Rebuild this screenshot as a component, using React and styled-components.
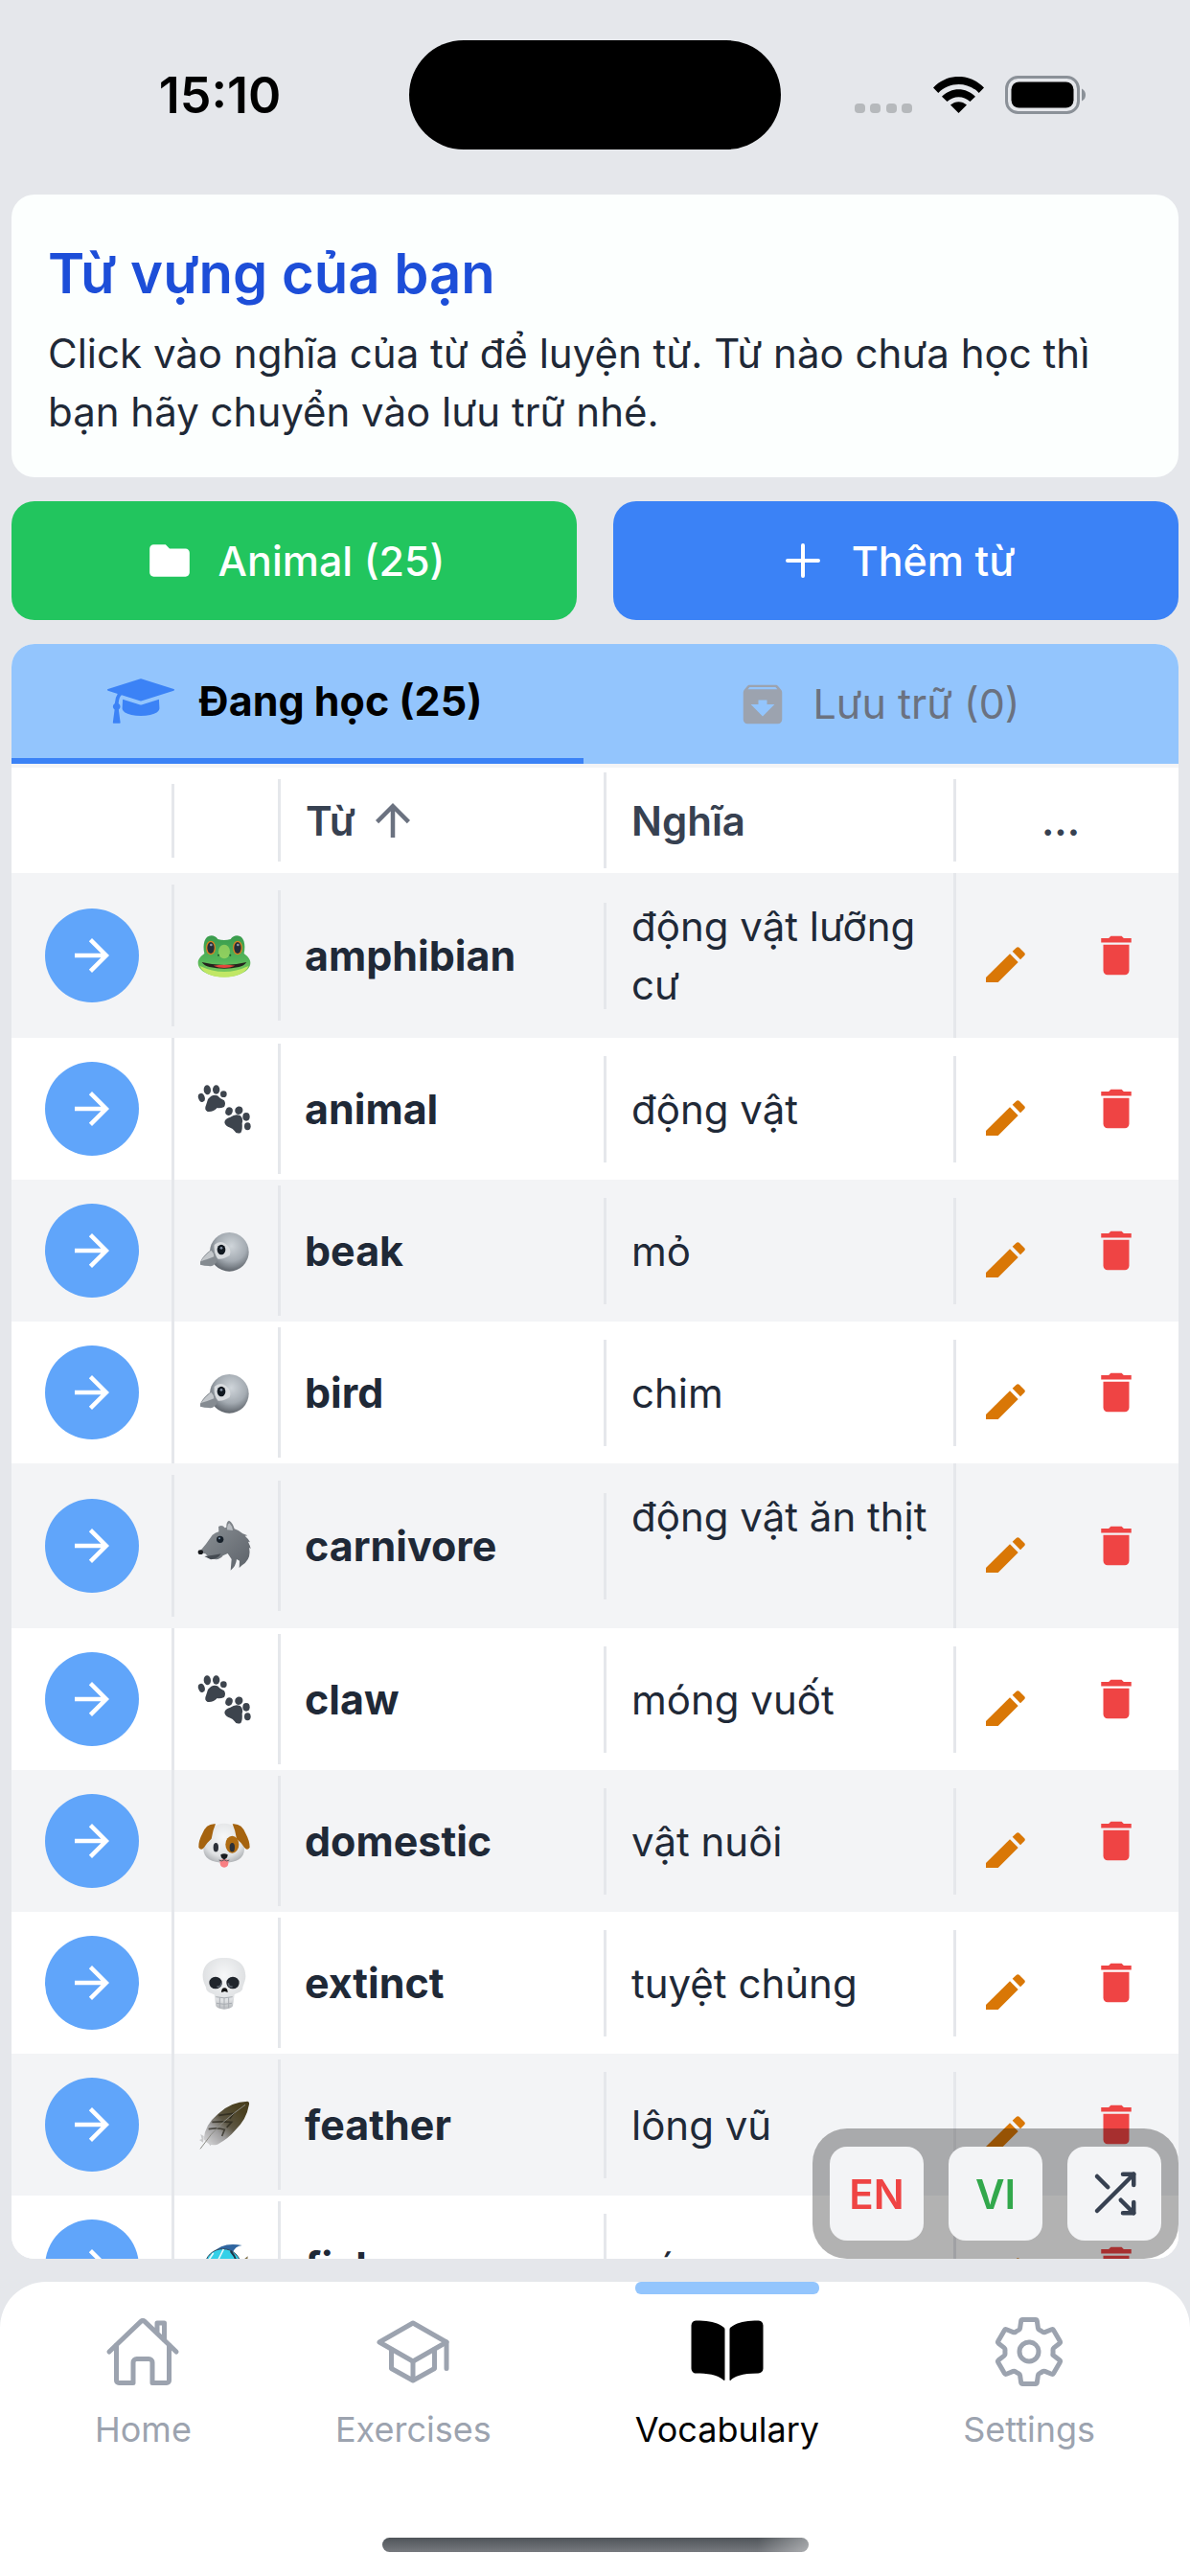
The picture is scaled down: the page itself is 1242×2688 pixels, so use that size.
import React from 'react';
import styled, { createGlobalStyle, css } from 'styled-components';
import { IoHomeOutline, IoSchoolOutline, IoBook, IoSettingsOutline } from 'react-icons/io5';
import { FiShuffle } from 'react-icons/fi';
import { MdArchive, MdFolder, MdDelete, MdArrowForward, MdArrowUpward } from 'react-icons/md';

const GlobalStyle = createGlobalStyle`
  *, *::before, *::after { box-sizing: border-box; }
  body { margin: 0; background: #e5e7eb; }
  body, button {
    font-family: Inter, Roboto, "Noto Sans", sans-serif;
    font-size: 42px;
    line-height: 61px;
    color: #1f2937;
  }
  button { margin: 0; padding: 0; border: 0; background: none; cursor: pointer; }
  svg { display: block; flex: none; }
`;

const Screen = styled.div`
  display: flex;
  flex-direction: column;
  height: 100vh;
`;

/* ---------- status bar ---------- */

const StatusBar = styled.header`
  display: grid;
  grid-template-columns: 1fr 388px 1fr;
  align-items: center;
  flex: none;
  padding: 42px 0 47px;
`;

const Clock = styled.time`
  padding-left: 32px;
  text-align: center;
  font-size: 52px;
  font-weight: 600;
  color: #000;
`;

const Island = styled.div`
  height: 114px;
  border-radius: 57px;
  background: #000;
`;

const StatusIcons = styled.div`
  display: flex;
  align-items: center;
  justify-content: center;
  gap: 22px;
  padding-right: 33px;
`;

/* ---------- page content ---------- */

const Main = styled.main`
  display: flex;
  flex-direction: column;
  flex: 1;
  gap: 25px;
  min-height: 0;
  padding: 0 12px 24px;
`;

const IntroCard = styled.section`
  flex: none;
  padding: 36px 38px 38px;
  border-radius: 24px;
  background: #fcfffe;
`;

const Title = styled.h1`
  margin: 0 0 7px;
  font-size: 58px;
  line-height: 92px;
  font-weight: 600;
  color: #1d4ed8;
`;

const Intro = styled.p`
  margin: 0;
`;

const Actions = styled.div`
  display: grid;
  grid-template-columns: 1fr 1fr;
  flex: none;
  gap: 38px;
`;

const ActionButton = styled.button`
  display: flex;
  align-items: center;
  justify-content: center;
  gap: 24px;
  height: 124px;
  border-radius: 24px;
  background: ${(p) => p.$color};
  font-size: 43px;
  font-weight: 500;
  color: #fff;
`;

const IconBox = styled.span`
  display: grid;
  place-items: center;
  width: 54px;
  height: 54px;
`;

const ListPanel = styled.section`
  position: relative;
  display: flex;
  flex-direction: column;
  flex: 1;
  min-height: 0;
  border-radius: 24px;
  overflow: hidden;
  background: #fff;
`;

const Tabs = styled.div`
  display: grid;
  grid-template-columns: 1fr 1fr;
  position: relative;
  flex: none;
  height: 129px;
  border-bottom: 4px solid #f3f4f6;
  background: #93c5fd;
`;

const Tab = styled.button`
  display: flex;
  align-items: center;
  justify-content: center;
  gap: 26px;
  padding-right: 18px;
  font-size: 43px;
  color: #6b7280;

  svg { color: #9ca3af; }

  ${(p) => p.$active && css`
    padding-bottom: 6px;
    font-weight: 700;
    color: #000;

    svg { color: #3b82f6; }
  `}
`;

const TabIndicator = styled.span`
  position: absolute;
  left: 0;
  bottom: 0;
  width: 49%;
  height: 6px;
  background: #3b82f6;
`;

/* ---------- word table ---------- */

const TableScroll = styled.div`
  flex: 1;
  min-height: 0;
  overflow-y: auto;
  scrollbar-width: none;
`;

const Table = styled.table`
  display: block;
`;

const TableHead = styled.thead`
  display: block;
`;

const TableBody = styled.tbody`
  display: block;
`;

const Row = styled.tr`
  display: grid;
  grid-template-columns: 170px 111px 340fr 365fr 232px;
  align-items: center;
  background: ${(p) => (p.$shaded ? '#f3f4f6' : '#fff')};
`;

const HeadRow = styled(Row)`
  min-height: 110px;
`;

const cell = css`
  display: flex;
  align-items: center;
  padding: 0;
  border-right: 3px solid #e5e7eb;
  text-align: left;
`;

const HeadCell = styled.th`
  ${cell}
  gap: 12px;
  height: ${(p) => p.$height}px;
  padding-left: ${(p) => (p.$text ? 26 : 0)}px;
  font-weight: 600;
  color: #374151;
`;

const HeadMenuCell = styled(HeadCell)`
  justify-content: center;
  padding-right: 14px;
  border-right: 0;
`;

const PlayCell = styled.td`
  ${cell}
  justify-content: center;
  height: 148px;
`;

const EmojiCell = styled.td`
  ${cell}
  justify-content: center;
  height: 136px;
  padding-right: 4px;
`;

const WordCell = styled.th`
  ${cell}
  height: 111px;
  padding-left: 25px;
  font-size: 43px;
  font-weight: 700;
`;

const MeaningCell = styled.td`
  ${cell}
  padding: 25px 24px 25px 26px;
  font-weight: 400;
  white-space: pre-wrap;
`;

const ToolsCell = styled.td`
  ${cell}
  gap: 14px;
  border-right: 0;
`;

const PlayButton = styled.button`
  display: grid;
  place-items: center;
  width: 98px;
  height: 98px;
  border-radius: 50%;
  background: #60a5fa;
  color: #fff;
`;

const ToolButton = styled.button`
  display: grid;
  place-items: center;
  width: 102px;
  height: 98px;
  color: #ef4444;
`;

const EditButton = styled(ToolButton)`
  padding-top: 18px;
  color: #d97706;
`;

/* ---------- floating language switch ---------- */

const FloatingBar = styled.div`
  position: absolute;
  right: 0;
  bottom: 0;
  display: flex;
  gap: 26px;
  padding: 19px 18px;
  border-radius: 36px;
  background: rgba(0, 0, 0, 0.3);
`;

const FloatingButton = styled.button`
  display: grid;
  place-items: center;
  width: 98px;
  height: 98px;
  border-radius: 18px;
  background: #f3f4f6;
  font-weight: 600;
  color: ${(p) => p.$color};
`;

/* ---------- bottom navigation ---------- */

const BottomNav = styled.nav`
  flex: none;
  border-radius: 48px 48px 0 0;
  background: #fff;
`;

const NavList = styled.ul`
  display: flex;
  justify-content: space-between;
  margin: 0;
  padding: 0 99px;
  list-style: none;
`;

const NavLink = styled.a`
  display: flex;
  flex-direction: column;
  align-items: center;
  font-size: 36px;
  line-height: 48px;
  text-decoration: none;
  color: ${(p) => (p.$active ? '#000' : '#9ca3af')};

  &::before {
    content: '';
    align-self: stretch;
    height: 13px;
    margin-bottom: 20px;
    border-radius: 6px;
    background: ${(p) => (p.$active ? '#93c5fd' : 'transparent')};
  }

  svg { margin-bottom: 17px; }
`;

const HomeBar = styled.div`
  width: 445px;
  height: 15px;
  margin: 89px auto 25px;
  border-radius: 8px;
  background: linear-gradient(90deg, transparent 88%, rgba(255, 255, 255, 0.4)),
    linear-gradient(#4f5459, #777a7f);
`;

/* ---------- drawings ---------- */

const SignalDots = () => (
  <svg width="60" height="38" viewBox="0 0 60 38" fill="#b6b9bc" aria-hidden="true">
    {[0, 16, 33, 49].map((x) => <rect key={x} x={x} y="28" width="11" height="10" rx="4" />)}
  </svg>
);

const Wifi = () => (
  <svg width="53" height="38" viewBox="0 0 53 38" aria-hidden="true">
    <path d="M0 11.5C15-4 38-4 53 11.5l-5.3 5.4C36 5 17 5 5.300 16.900z" />
    <path d="M9 20.700c10-10 25-10 35 0l-5.500 5.400c-7-6.500-17-6.500-24 0z" />
    <path d="M18 29.600c5-4.600 12-4.600 17 0L26.500 38z" />
  </svg>
);

const Battery = () => (
  <svg width="84" height="40" viewBox="0 0 84 40" aria-hidden="true">
    <rect x="1.500" y="1.500" width="75" height="37" rx="12" fill="none" stroke="#8b9198" strokeWidth="3" />
    <rect x="6.500" y="6.500" width="65" height="27" rx="8" />
    <path d="M80 13.500q4 2 4 6.500t-4 6.500z" fill="#8b9198" />
  </svg>
);

const Plus = () => (
  <svg width="36" height="36" viewBox="0 0 36 36" fill="none" stroke="currentColor" strokeWidth="4" strokeLinecap="round" aria-hidden="true">
    <path d="M18 2v32M2 18h32" />
  </svg>
);

const GraduationCap = () => (
  <svg width="70" height="47" viewBox="0 128 2304 1536" fill="currentColor" aria-hidden="true">
    <path d="M1774 836l18 316q4 69-82 128t-235 93.500-323 34.500-323-34.500-235-93.500-82-128l18-316 574 181q22 7 48 7t48-7zM2304 512q0 23-22 31l-1120 352q-4 1-10 1t-10-1l-652-206q-43 34-71 111.500t-34 178.500q63 36 63 109 0 69-58 107l58 433q2 14-8 25-9 11-24 11H224q-15 0-24-11-10-11-8-25l58-433q-58-38-58-107 0-73 65-111 11-207 98-330L22 543q-22-8-22-31t22-31l1120-352q4-1 10-1t10 1l1120 352q22 8 22 31z" />
  </svg>
);

const Pencil = () => (
  <svg width="41" height="37" viewBox="0 0 123 111" fill="currentColor" aria-hidden="true">
    <path d="M0 111V96L75 22l26 26-63 63z" />
    <path d="M83 14L95 3q5-5 10 0l15 15q5 5 0 10l-12 12z" />
  </svg>
);

const emojiArt = {
  frog: (
    <>
      <path d="M22 78C16 50 22 22 44 22q12 0 20 11 20 6 40 0 8-11 20-11c22 0 28 28 22 56 10 8 20 16 20 29 0 28-42 44-82 44S2 135 2 107c0-13 10-21 20-29z" fill="url(#frogSkin)" />
      <path d="M8 117q76 36 152 0c-8 23-42 35-76 35s-68-12-76-35z" fill="#c1e765" />
      <ellipse cx="42" cy="60" rx="15" ry="22" fill="#d98221" />
      <ellipse cx="126" cy="60" rx="15" ry="22" fill="#d98221" />
      <ellipse cx="42" cy="60" rx="11" ry="18" fill="#252d38" />
      <ellipse cx="126" cy="60" rx="11" ry="18" fill="#252d38" />
      <circle cx="43" cy="51" r="4" fill="#8d99a5" />
      <circle cx="127" cy="51" r="4" fill="#8d99a5" />
      <ellipse cx="84" cy="72" rx="18" ry="22" fill="#a8dc62" opacity=".7" />
      <circle cx="66" cy="83" r="3" fill="#1d5a2b" />
      <circle cx="103" cy="83" r="3" fill="#1d5a2b" />
      <path d="M14 105q70 18 140 0-8 12-24 15-46 10-92 0-16-3-24-15z" fill="#24221d" />
      <path d="M50 116q34-6 68 0-34 14-68 0z" fill="#e5463c" />
    </>
  ),
  paws: (
    <g fill="#3d444d">
      <ellipse cx="13" cy="49" rx="10" ry="14" transform="rotate(-18 13 49)" />
      <ellipse cx="31" cy="25" rx="11" ry="15" transform="rotate(-6 31 25)" />
      <ellipse cx="59" cy="24" rx="11" ry="14" />
      <ellipse cx="82" cy="38" rx="10" ry="10" />
      <path d="M33 54q14-18 30-11 8 10 21 15 6 10 0 20-12 5-22 3-12 14-30 12-12-6-5-20z" />
      <ellipse cx="99" cy="92" rx="11" ry="13" transform="rotate(20 99 92)" />
      <ellipse cx="130" cy="89" rx="12" ry="13" transform="rotate(35 130 89)" />
      <ellipse cx="153" cy="109" rx="11" ry="13" />
      <ellipse cx="157" cy="139" rx="10" ry="12" />
      <path d="M85 127q0-12 18-17 16-12 31-5 11 10 6 25 2 20-4 29-14 5-20-6-5-8-13-10-16-4-18-16z" />
    </g>
  ),
  bird: (
    <>
      <circle cx="100" cy="88" r="61" fill="url(#birdHead)" />
      <path d="M9 119q9-20 34-38 18 12 17 39-12 16-24 12-14 0-27-4z" fill="#858b91" />
      <path d="M11 117q11-17 32-34 9 8 9 20-18 8-41 14z" fill="#c3c7cb" />
      <path d="M53 66q18-16 36-3 20 16 12 36-17 12-36 11-14-14-12-44z" fill="#d9dcdf" />
      <ellipse cx="75" cy="81" rx="13" ry="16" fill="#111820" />
      <circle cx="75" cy="76" r="4" fill="#8592a3" />
    </>
  ),
  wolf: (
    <>
      <path d="M5 105q24-28 42-55 10-8 20-10l-1-16q12-8 20 4l5-2q-1-18 8-21 12 6 17 26 16 5 26 15l15 6-8 1q10 8 16 20l-6-2q6 12 8 22l-5-3q8 36-22 55l-9 8 1-22-9-5q-2 22-19 35l3-35-12-18-15 7q-8 11-22 12l-20-5-13-13z" fill="url(#wolfFur)" />
      <path d="M93 34q0-16 7-21 9 8 11 23z" fill="#b9bdc2" />
      <path d="M22 117q20-2 52-8-10 17-32 18z" fill="#454b52" />
      <ellipse cx="10" cy="104" rx="8" ry="7" fill="#17191c" />
      <circle cx="71" cy="64" r="11" fill="#17202a" />
      <circle cx="69" cy="61" r="3" fill="#7f93ad" />
    </>
  ),
  dog: (
    <>
      <path d="M84 29c28 0 44 18 46 52 10 6 17 16 17 28 0 30-24 43-63 43s-65-13-65-43c0-12 9-22 17-28 2-34 20-52 48-52z" fill="url(#bone)" />
      <path d="M57 31Q28 28 15 62 3 84 4 104q8 12 17 0 12-18 23-27 4-26 13-46zM110 31q29-3 42 31 12 22 12 42-8 12-17 0-12-18-24-27-4-26-13-46z" fill="#a5630f" />
      <ellipse cx="109" cy="95" rx="21" ry="27" fill="#b06c12" />
      <ellipse cx="58" cy="104" rx="8" ry="14" fill="#2b3038" />
      <ellipse cx="109" cy="104" rx="8" ry="14" fill="#2b3038" />
      <path d="M71 144q13-6 26 0v10q-1 13-13 13t-13-13z" fill="#f87f83" />
      <path d="M84 133v10m-16 1q8 6 16-1 8 7 16 1" fill="none" stroke="#55585d" strokeWidth="3" />
      <path d="M73 127q11-6 22 0 0 12-11 15-11-3-11-15z" fill="#191b1f" />
    </>
  ),
  skull: (
    <>
      <path d="M84 6c46 0 67 24 67 58 0 12-5 22-9 34 1 15-16 17-26 23l-5 36q-9 10-27 10t-26-10l-5-36c-12-6-26-8-26-23-6-12-10-22-10-34C17 30 38 6 84 6z" fill="url(#bone)" />
      <ellipse cx="57" cy="84" rx="20" ry="19" fill="#20252c" />
      <ellipse cx="111" cy="84" rx="20" ry="19" fill="#20252c" />
      <path d="M61 96q14 2 14-11M97 85q0 13 13 11" fill="none" stroke="#59616b" strokeWidth="5" />
      <path d="M75 114q0-14 10-14t10 14l-9-3z" fill="#111" />
      <path d="M58 128q26 7 52 0M60 148q24 6 48 0M70 130v32M84 132v32M98 130v32" stroke="#a9adb2" strokeWidth="3" fill="none" />
    </>
  ),
  feather: (
    <>
      <path d="M20 130Q22 85 65 50 105 12 157 11q8 2 4 14-7 43-43 77-20 25-55 44-25 8-43-16z" fill="url(#quill)" />
      <path d="M67 55q20-3 46-6l-12 17M46 76q30-3 61 0l-15 17M35 98q30-6 50 2l-8 20" fill="none" stroke="#26231a" strokeWidth="5" opacity=".7" />
      <path d="M9 160q34-50 70-82T150 22" fill="none" stroke="#8b8b84" strokeWidth="3" />
      <path d="M20 120l-10-6 4 15-8 3 12 8M34 139l6 12 8-9" fill="#c9c9cb" />
    </>
  ),
  fish: (
    <>
      <path d="M48 42Q78 6 140 18q-22 2-30 24z" fill="#2f65a0" />
      <path d="M134 66q12-2 24-14-2 30-6 56l-22-14z" fill="#80724a" />
      <ellipse cx="80" cy="82" rx="56" ry="53" fill="#35d0e8" stroke="#31465c" strokeWidth="3" />
      <path d="M50 42L34 66M82 30L64 66" stroke="#e9f8fb" strokeWidth="5" />
      <path d="M104 36q26 28 22 70" fill="none" stroke="#243447" strokeWidth="6" />
      <circle cx="48" cy="96" r="9" fill="#1a2430" />
    </>
  ),
};

const Emoji = ({ name }) => (
  <svg width="56" height="56" viewBox="0 0 168 168" role="img" aria-label={name}>
    {emojiArt[name]}
  </svg>
);

const EmojiPaints = () => (
  <svg width="0" height="0" aria-hidden="true">
    <defs>
      <linearGradient id="frogSkin" x2="0" y2="1">
        <stop stopColor="#389b4c" />
        <stop offset=".6" stopColor="#55b65a" />
        <stop offset="1" stopColor="#86cf5c" />
      </linearGradient>
      <radialGradient id="birdHead" cx=".55" cy=".35" r=".65">
        <stop stopColor="#cfd5da" />
        <stop offset=".6" stopColor="#a4abb2" />
        <stop offset="1" stopColor="#5f656c" />
      </radialGradient>
      <linearGradient id="wolfFur" x2="1" y2="1">
        <stop stopColor="#8f9499" />
        <stop offset="1" stopColor="#5b6168" />
      </linearGradient>
      <radialGradient id="bone" cx=".5" cy=".35" r=".7">
        <stop stopColor="#f6f7f8" />
        <stop offset=".7" stopColor="#dfe1e3" />
        <stop offset="1" stopColor="#a9acb0" />
      </radialGradient>
      <linearGradient id="quill" x1="1" x2="0" y2="1">
        <stop offset=".2" stopColor="#4a4020" />
        <stop offset=".5" stopColor="#5d5745" />
        <stop offset=".7" stopColor="#a09fa0" />
        <stop offset="1" stopColor="#dcdcde" />
      </linearGradient>
    </defs>
  </svg>
);

/* ---------- data ---------- */

const words = [
  { word: 'amphibian', meaning: 'động vật lưỡng cư', emoji: 'frog' },
  { word: 'animal', meaning: 'động vật', emoji: 'paws' },
  { word: 'beak', meaning: 'mỏ', emoji: 'bird' },
  { word: 'bird', meaning: 'chim', emoji: 'bird' },
  { word: 'carnivore', meaning: 'động vật ăn thịt\n\n', emoji: 'wolf' },
  { word: 'claw', meaning: 'móng vuốt', emoji: 'paws' },
  { word: 'domestic', meaning: 'vật nuôi', emoji: 'dog' },
  { word: 'extinct', meaning: 'tuyệt chủng', emoji: 'skull' },
  { word: 'feather', meaning: 'lông vũ', emoji: 'feather' },
  { word: 'fish', meaning: 'cá', emoji: 'fish' },
];

const navItems = [
  { label: 'Home', Icon: IoHomeOutline },
  { label: 'Exercises', Icon: IoSchoolOutline },
  { label: 'Vocabulary', Icon: IoBook, active: true },
  { label: 'Settings', Icon: IoSettingsOutline },
];

const WordRow = ({ item, shaded }) => (
  <Row $shaded={shaded}>
    <PlayCell>
      <PlayButton type="button" aria-label={`Practise ${item.word}`}>
        <MdArrowForward size={54} />
      </PlayButton>
    </PlayCell>
    <EmojiCell><Emoji name={item.emoji} /></EmojiCell>
    <WordCell scope="row">{item.word}</WordCell>
    <MeaningCell>{item.meaning}</MeaningCell>
    <ToolsCell>
      <EditButton type="button" aria-label={`Edit ${item.word}`}><Pencil /></EditButton>
      <ToolButton type="button" aria-label={`Delete ${item.word}`}><MdDelete size={54} /></ToolButton>
    </ToolsCell>
  </Row>
);

export default function App() {
  return (
    <>
      <GlobalStyle />
      <Screen>
        <StatusBar>
          <Clock>15:10</Clock>
          <Island />
          <StatusIcons>
            <SignalDots />
            <Wifi />
            <Battery />
          </StatusIcons>
        </StatusBar>

        <Main>
          <IntroCard>
            <Title>Từ vựng của bạn</Title>
            <Intro>
              Click vào nghĩa của từ để luyện từ. Từ nào chưa học thì bạn hãy chuyển vào lưu trữ nhé.
            </Intro>
          </IntroCard>

          <Actions>
            <ActionButton type="button" $color="#22c55e">
              <IconBox><MdFolder size={50} /></IconBox>
              Animal (25)
            </ActionButton>
            <ActionButton type="button" $color="#3b82f6">
              <IconBox><Plus /></IconBox>
              Thêm từ
            </ActionButton>
          </Actions>

          <ListPanel>
            <Tabs role="tablist">
              <Tab type="button" role="tab" aria-selected="true" $active>
                <GraduationCap />
                Đang học (25)
              </Tab>
              <Tab type="button" role="tab" aria-selected="false">
                <MdArchive size={54} />
                Lưu trữ (0)
              </Tab>
              <TabIndicator />
            </Tabs>

            <TableScroll>
              <Table>
                <TableHead>
                  <HeadRow>
                    <HeadCell $height={77} aria-label="Practise" />
                    <HeadCell $height={86} aria-label="Picture" />
                    <HeadCell $height={100} $text>
                      Từ
                      <MdArrowUpward size={54} color="#6b7280" />
                    </HeadCell>
                    <HeadCell $height={86} $text>Nghĩa</HeadCell>
                    <HeadMenuCell $height={86}>...</HeadMenuCell>
                  </HeadRow>
                </TableHead>
                <TableBody>
                  {words.map((item, i) => (
                    <WordRow key={item.word} item={item} shaded={i % 2 === 0} />
                  ))}
                </TableBody>
              </Table>
            </TableScroll>

            <FloatingBar>
              <FloatingButton type="button" $color="#ef4444">EN</FloatingButton>
              <FloatingButton type="button" $color="#32a84c">VI</FloatingButton>
              <FloatingButton type="button" $color="#374151" aria-label="Shuffle">
                <FiShuffle size={54} />
              </FloatingButton>
            </FloatingBar>
          </ListPanel>
        </Main>

        <BottomNav>
          <NavList>
            {navItems.map(({ label, Icon, active }) => (
              <li key={label}>
                <NavLink href="#" $active={active} aria-current={active ? 'page' : undefined}>
                  <Icon size={80} />
                  {label}
                </NavLink>
              </li>
            ))}
          </NavList>
          <HomeBar />
        </BottomNav>
      </Screen>
      <EmojiPaints />
    </>
  );
}
